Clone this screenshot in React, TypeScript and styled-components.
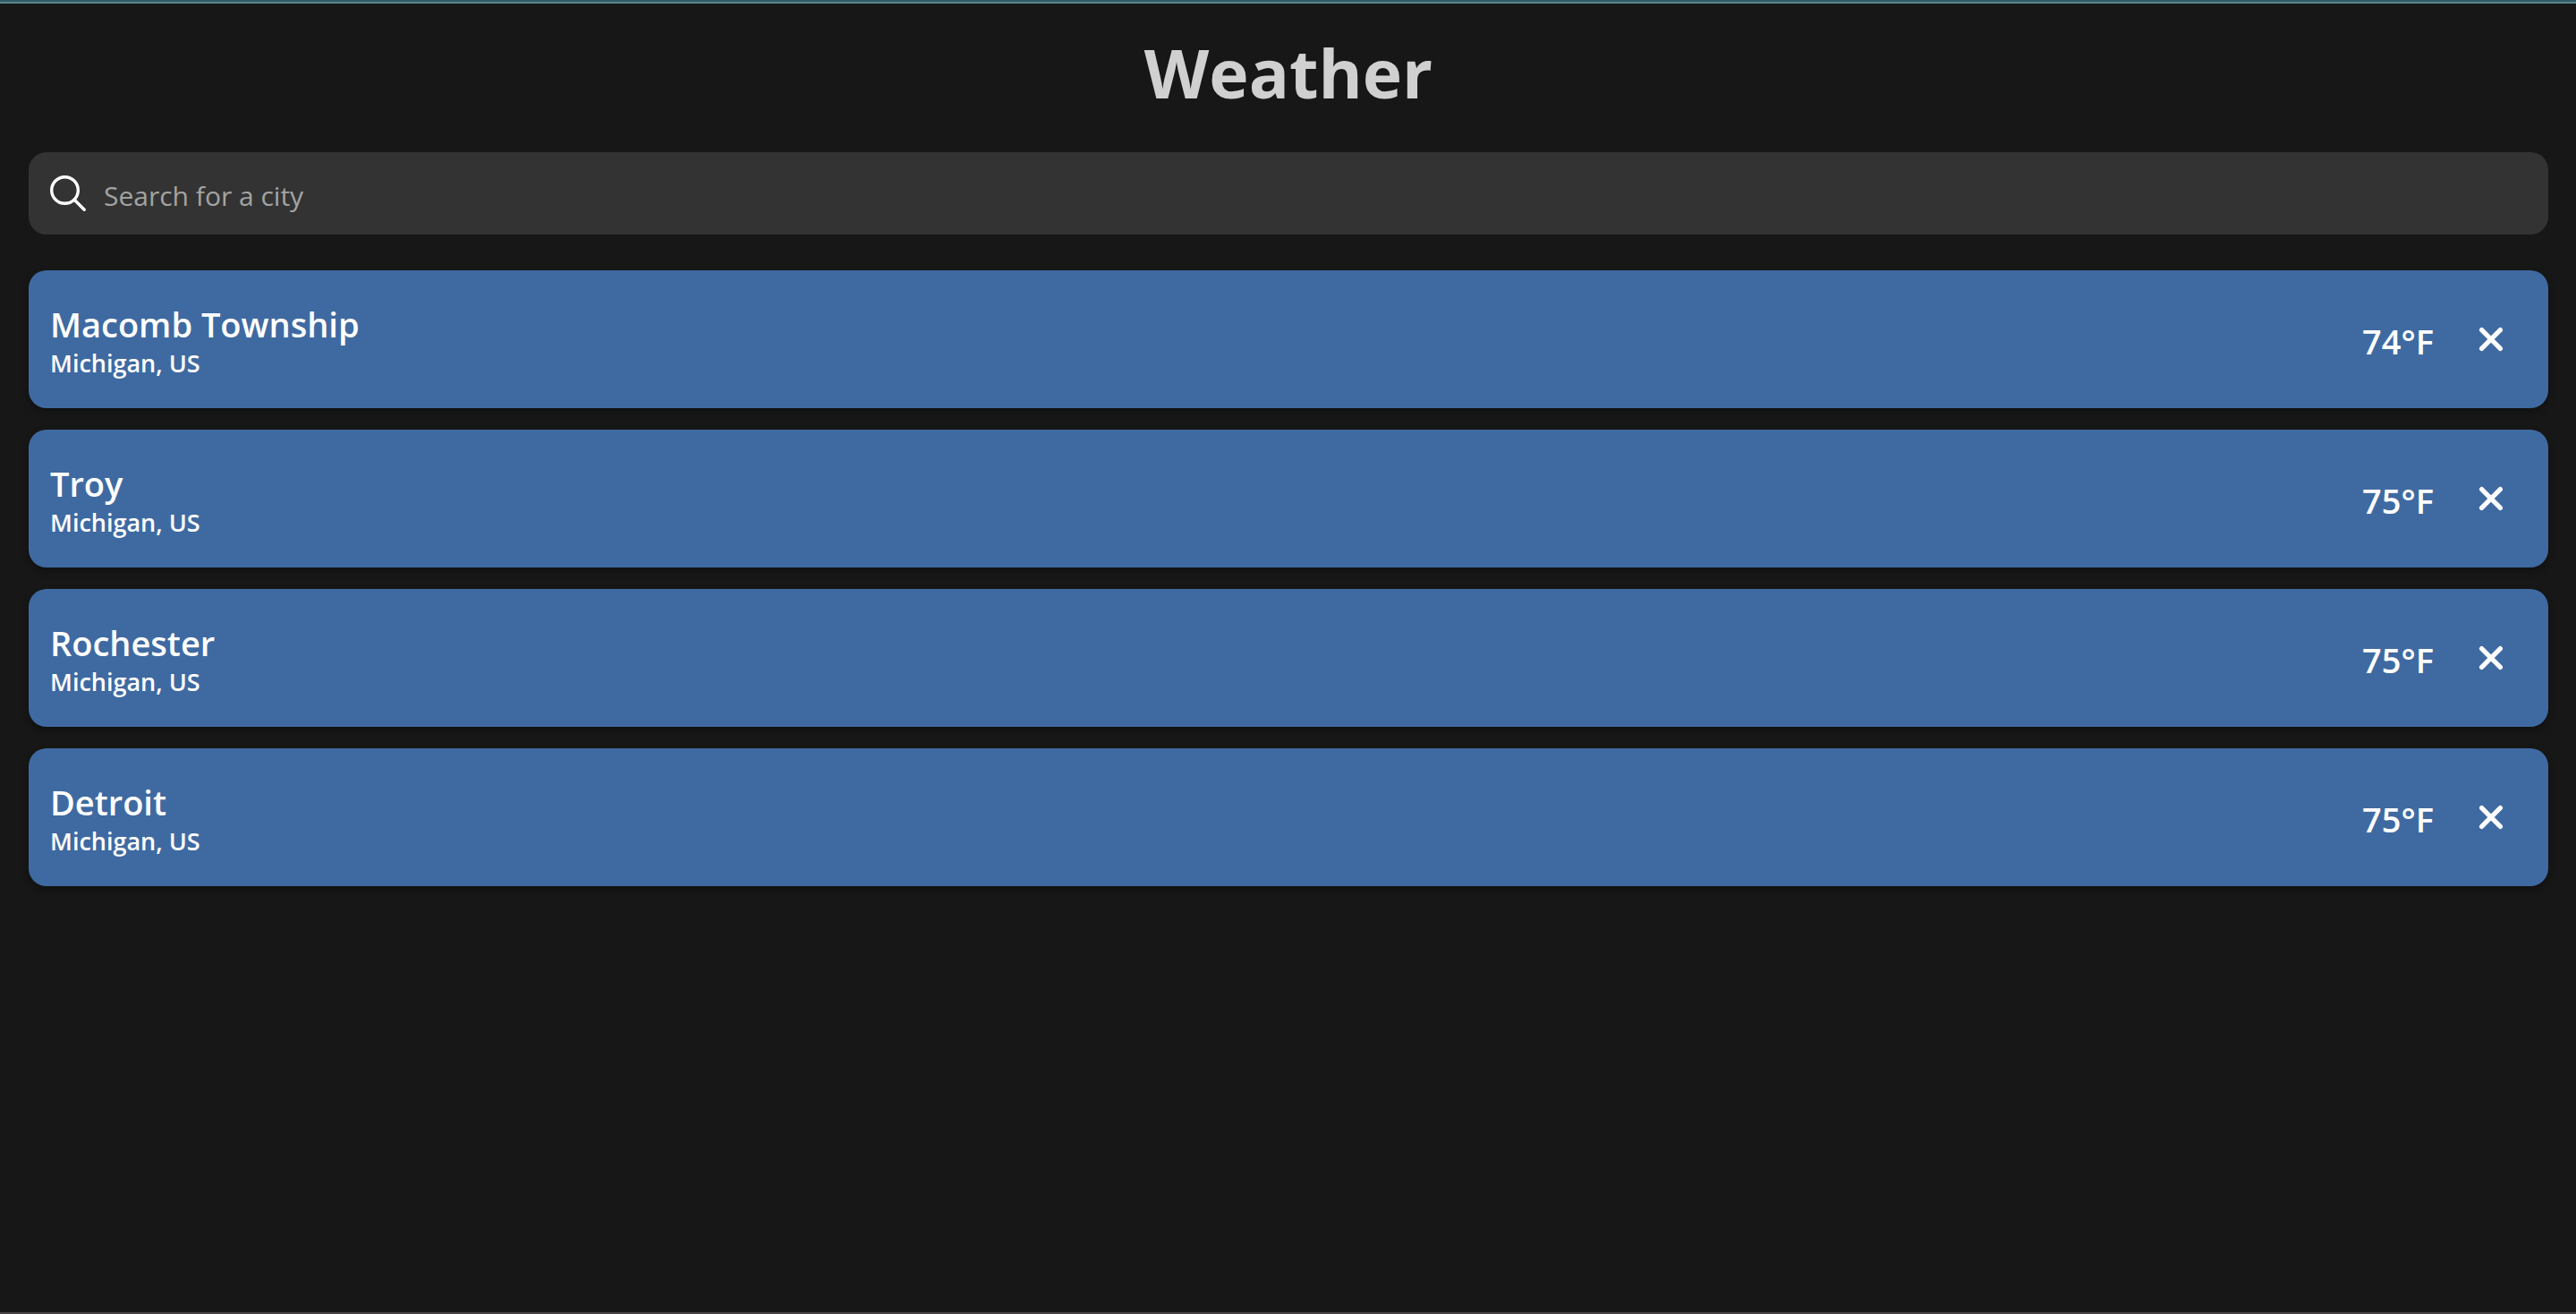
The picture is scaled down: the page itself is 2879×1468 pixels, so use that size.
import React, { useState } from "react";
import styled, { createGlobalStyle } from "styled-components";

const GlobalStyle = createGlobalStyle`
  *, *::before, *::after { box-sizing: border-box; }
  body {
    margin: 0;
    background: #171717;
    color: #fff;
    font-family: "Open Sans", "Noto Sans", sans-serif;
  }
`;

const Page = styled.div`
  display: flex;
  flex-direction: column;
  min-height: 100vh;
  border-bottom: 2px solid #494446;
`;

const TopStrip = styled.div`
  height: 4px;
  background: #315b66;
  border-bottom: 2px solid #5b8787;
`;

const Content = styled.main`
  display: flex;
  flex-direction: column;
  gap: 40px;
  padding: 28px 31px 32px 32px;
`;

const Title = styled.h1`
  margin: 0;
  color: #d0d0d0;
  font-size: 75px;
  font-weight: 700;
  line-height: 98px;
  text-align: center;
`;

const SearchBox = styled.label`
  display: flex;
  align-items: center;
  gap: 20px;
  padding: 24px;
  border-radius: 20px;
  background: #333;
`;

const SearchInput = styled.input`
  flex: 1;
  min-width: 0;
  height: 44px;
  padding: 4px 0 0;
  border: 0;
  outline: 0;
  background: transparent;
  color: #fff;
  font-family: inherit;
  font-size: 30px;
  line-height: 40px;

  &::placeholder {
    color: #a3a3a3;
    opacity: 1;
  }
`;

const CityList = styled.ul`
  display: flex;
  flex-direction: column;
  gap: 24px;
  margin: 0;
  padding: 0;
  list-style: none;
`;

const CityCard = styled.li`
  display: flex;
  align-items: center;
  padding: 35px 24px 31px;
  border-radius: 20px;
  background: #3f6aa1;
  box-shadow: 0 4px 8px rgba(0, 0, 0, 0.3);
`;

const Place = styled.div`
  flex: 1;
  min-width: 0;
`;

const CityName = styled.h2`
  margin: 0;
  font-size: 38px;
  font-weight: 600;
  line-height: 50px;
`;

const Region = styled.p`
  margin: 0;
  font-size: 27px;
  font-weight: 600;
  line-height: 38px;
`;

const Temperature = styled.span`
  margin-right: 24px;
  font-size: 38px;
  font-weight: 600;
  line-height: 50px;
`;

const RemoveButton = styled.button`
  display: flex;
  align-items: center;
  justify-content: center;
  width: 80px;
  height: 80px;
  margin: 0 0 4px;
  padding: 0;
  border: 0;
  background: transparent;
  color: inherit;
  cursor: pointer;
`;

const SearchIcon = () => (
  <svg width="40" height="40" viewBox="0 0 40 40" fill="none" stroke="#fff" strokeWidth="3.4" strokeLinecap="round" aria-hidden="true">
    <circle cx="16.5" cy="16.5" r="14.8" />
    <path d="M27.2 27.2L38.2 38.2" />
  </svg>
);

const CrossIcon = () => (
  <svg width="32" height="32" viewBox="0 0 32 32" fill="none" stroke="currentColor" strokeWidth="5.2" strokeLinecap="round" aria-hidden="true">
    <path d="M5.6 5.6L26.4 26.4M26.4 5.6L5.6 26.4" />
  </svg>
);

const initialCities = [
  { name: "Macomb Township", region: "Michigan, US", temp: 74 },
  { name: "Troy", region: "Michigan, US", temp: 75 },
  { name: "Rochester", region: "Michigan, US", temp: 75 },
  { name: "Detroit", region: "Michigan, US", temp: 75 },
];

export default function App() {
  const [cities, setCities] = useState(initialCities);
  const remove = (name: string) => setCities((all) => all.filter((city) => city.name !== name));

  return (
    <>
      <GlobalStyle />
      <Page>
        <TopStrip />
        <Content>
          <Title>Weather</Title>
          <SearchBox htmlFor="city-search">
            <SearchIcon />
            <SearchInput id="city-search" type="text" placeholder="Search for a city" />
          </SearchBox>
          <CityList>
            {cities.map((city) => (
              <CityCard key={city.name}>
                <Place>
                  <CityName>{city.name}</CityName>
                  <Region>{city.region}</Region>
                </Place>
                <Temperature>{city.temp}°F</Temperature>
                <RemoveButton type="button" aria-label={`Remove ${city.name}`} onClick={() => remove(city.name)}>
                  <CrossIcon />
                </RemoveButton>
              </CityCard>
            ))}
          </CityList>
        </Content>
      </Page>
    </>
  );
}
